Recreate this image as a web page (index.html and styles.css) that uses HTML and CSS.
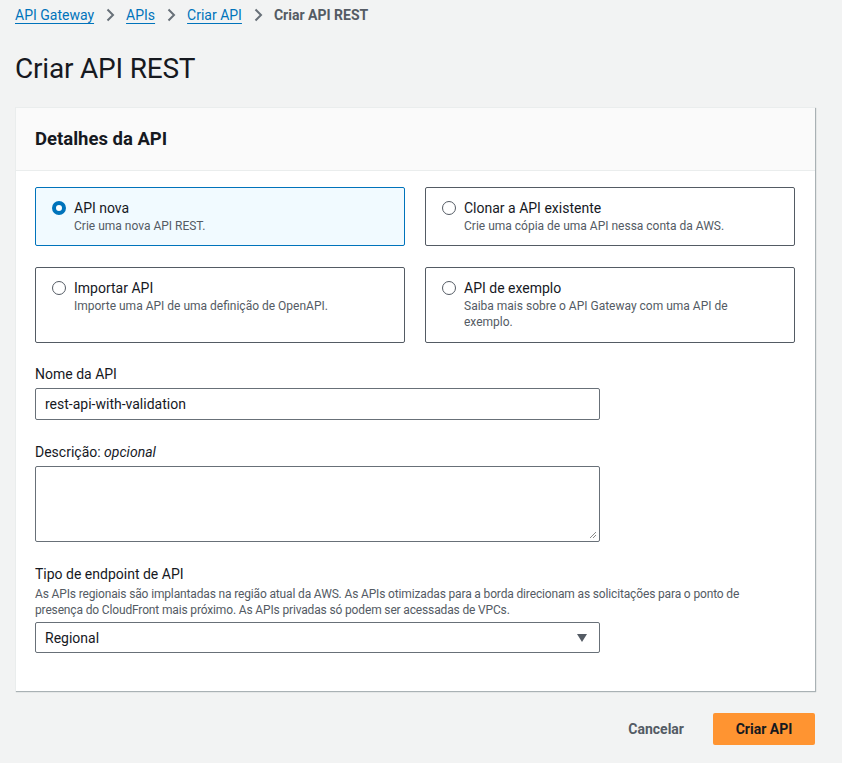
FILE: index.html
```html
<!DOCTYPE html>
<html lang="pt">
<head>
<meta charset="utf-8">
<title>Criar API REST</title>
<link rel="stylesheet" href="styles.css">
</head>
<body>
<div class="page">
  <nav class="crumbs">
    <a href="#">API Gateway</a>
    <svg class="sep" width="16" height="16" viewBox="0 0 16 16"><path d="M5.5 2.5 11 8l-5.5 5.5" fill="none" stroke="#687078" stroke-width="2"/></svg>
    <a href="#">APIs</a>
    <svg class="sep" width="16" height="16" viewBox="0 0 16 16"><path d="M5.5 2.5 11 8l-5.5 5.5" fill="none" stroke="#687078" stroke-width="2"/></svg>
    <a href="#">Criar API</a>
    <svg class="sep" width="16" height="16" viewBox="0 0 16 16"><path d="M5.5 2.5 11 8l-5.5 5.5" fill="none" stroke="#687078" stroke-width="2"/></svg>
    <span class="current">Criar API REST</span>
  </nav>

  <h1 class="title">Criar API REST</h1>

  <section class="card">
    <header class="card-head"><h2>Detalhes da API</h2></header>
    <div class="card-body">
      <div class="tiles">
        <label class="tile selected">
          <span class="radio checked"></span>
          <span class="tile-text"><span class="tile-title">API nova</span><span class="tile-desc">Crie uma nova API REST.</span></span>
        </label>
        <label class="tile">
          <span class="radio"></span>
          <span class="tile-text"><span class="tile-title">Clonar a API existente</span><span class="tile-desc">Crie uma cópia de uma API nessa conta da AWS.</span></span>
        </label>
        <label class="tile">
          <span class="radio"></span>
          <span class="tile-text"><span class="tile-title">Importar API</span><span class="tile-desc">Importe uma API de uma definição de OpenAPI.</span></span>
        </label>
        <label class="tile">
          <span class="radio"></span>
          <span class="tile-text"><span class="tile-title">API de exemplo</span><span class="tile-desc">Saiba mais sobre o API Gateway com uma API de exemplo.</span></span>
        </label>
      </div>

      <div class="field">
        <div class="label">Nome da API</div>
        <div class="input">rest-api-with-validation</div>
      </div>

      <div class="field">
        <div class="label">Descrição: <i>opcional</i></div>
        <div class="textarea">
          <svg class="grip" width="8" height="8" viewBox="0 0 8 8"><path d="M7 1 1 7M7 4 4 7" stroke="#6b6b6b" stroke-width="0.8"/></svg>
        </div>
      </div>

      <div class="field">
        <div class="label">Tipo de endpoint de API</div>
        <div class="hint">As APIs regionais são implantadas na região atual da AWS. As APIs otimizadas para a borda direcionam as solicitações para o ponto de presença do CloudFront mais próximo. As APIs privadas só podem ser acessadas de VPCs.</div>
        <div class="select">
          <span>Regional</span>
          <svg width="12" height="10" viewBox="0 0 12 10"><path d="M1 1h10L6 9z" fill="#545b64"/></svg>
        </div>
      </div>
    </div>
  </section>

  <div class="actions">
    <button class="btn-link">Cancelar</button>
    <button class="btn-primary">Criar API</button>
  </div>
</div>
</body>
</html>
```

FILE: styles.css
```css
* { box-sizing: border-box; }
html, body { margin: 0; padding: 0; }
body {
  background: #f2f3f3;
  font-family: Roboto, "Noto Sans", "Liberation Sans", sans-serif;
  color: #16191f;
  width: 842px;
  height: 763px;
  overflow: hidden;
}
.page { padding: 4px 27px 0 15px; }

.crumbs {
  display: flex;
  align-items: center;
  gap: 8px;
  font-size: 14px;
  height: 22px;
}
.crumbs a {
  color: #0073bb;
  text-decoration: underline;
  text-underline-offset: 3px;
  text-decoration-thickness: 1px;
}
.crumbs .sep { flex: none; }
.crumbs .current { color: #545b64; font-weight: 700; }

.title {
  margin: 25px 0 0;
  font-size: 28px;
  font-weight: 400;
  line-height: 36px;
  height: 36px;
  letter-spacing: -0.2px;
}

.card {
  margin-top: 20px;
  background: #fff;
  border-top: 1px solid #eaeded;
  border-left: 1px solid #eaeded;
  box-shadow: 1px 1px 1px 0 rgba(0, 28, 36, 0.3);
  width: 800px;
  height: 584px;
}
.card-head {
  background: #fafafa;
  border-bottom: 1px solid #eaeded;
  height: 63px;
  padding: 0 19px;
  display: flex;
  align-items: center;
}
.card-head h2 { margin: 0; font-size: 18.5px; font-weight: 700; line-height: 22px; }

.card-body { padding: 16px 19px 0; }

.tiles {
  display: grid;
  grid-template-columns: 370px 370px;
  column-gap: 20px;
  row-gap: 21px;
}
.tile {
  display: flex;
  align-items: flex-start;
  gap: 8px;
  border: 1px solid #545b64;
  border-radius: 2px;
  padding: 12px 15px 0 16px;
  min-height: 59px;
  background: #fff;
}
.tiles .tile:nth-child(3), .tiles .tile:nth-child(4) { min-height: 76px; }
.tile.selected { background: #f1faff; border-color: #0073bb; }
.radio {
  flex: none;
  width: 14px;
  height: 14px;
  border-radius: 50%;
  border: 1px solid #545b64;
  margin-top: 1px;
  background: #fff;
}
.radio.checked { border: 4px solid #0073bb; }
.tile-text { display: flex; flex-direction: column; }
.tile-title { font-size: 14px; line-height: 16px; }
.tile-desc { font-size: 12px; line-height: 16px; color: #545b64; margin-top: 2px; max-width: 300px; }

.field { margin-top: 23px; width: 565px; }
.tiles + .field { margin-top: 22px; }
.label { font-size: 14px; line-height: 18px; margin-bottom: 5px; }
.label i { font-style: italic; }
.input, .textarea, .select {
  border: 1px solid #687078;
  border-radius: 2px;
  background: #fff;
  font-size: 14px;
}
.input { height: 32px; padding: 0 9px; display: flex; align-items: center; }
.textarea { height: 76px; position: relative; margin-top: 2px; }
.grip { position: absolute; right: 2px; bottom: 2px; }
.hint { font-size: 12px; line-height: 16px; color: #545b64; width: 740px; margin-top: -2px; margin-bottom: 4px; letter-spacing: -0.15px; }
.select {
  height: 31px;
  padding: 0 11px 0 9px;
  display: flex;
  align-items: center;
  justify-content: space-between;
}

.actions {
  display: flex;
  justify-content: flex-end;
  align-items: center;
  gap: 20px;
  margin-top: 22px;
  width: 800px;
}
button { font-family: inherit; font-size: 14px; font-weight: 700; cursor: pointer; }
.btn-link { background: none; border: 0; color: #545b64; padding: 0 9px; height: 32px; }
.btn-primary {
  background: #ff9431;
  color: #16191f;
  border: 0;
  border-radius: 2px;
  height: 32px;
  width: 102px;
}
```
